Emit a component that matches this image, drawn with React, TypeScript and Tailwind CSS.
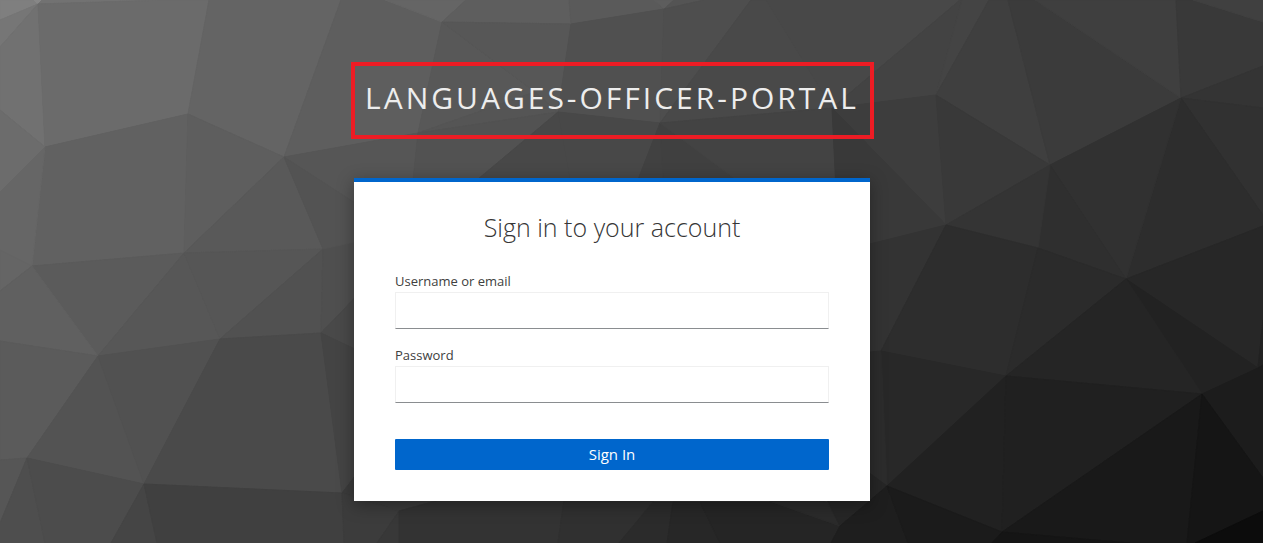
const facets: [string, string][] = [
  // top left
  ['0,0 34,0 38,4 0,20', '#7f7f7f'],
  ['34,0 42,0 38,4', '#878787'],
  ['0,20 38,4 0,47', '#767676'],
  ['38,4 0,47 0,110 45,147', '#717171'],
  ['42,0 165,0 38,4', '#727272'],
  ['38,4 165,0 209,0 188,114 45,147', '#6b6b6b'],
  ['0,110 45,147 0,192', '#6c6c6c'],
  ['209,0 341,0 284,157 188,114', '#646464'],
  ['45,147 188,114 184,253 32,266', '#616161'],
  ['0,192 45,147 32,266 0,250', '#666666'],
  ['0,250 32,266 0,291', '#656565'],
  ['188,114 284,157 184,253', '#5e5e5e'],
  ['284,157 184,253 323,249', '#595959'],
  // lower left
  ['32,266 184,253 98,356', '#5b5b5b'],
  ['184,253 98,356 220,339', '#575757'],
  ['184,253 323,249 220,339', '#565656'],
  ['323,249 220,339 321,333', '#515151'],
  ['0,291 32,266 98,356 0,341', '#606060'],
  ['0,341 98,356 27,458 0,460', '#5b5b5b'],
  ['98,356 27,458 144,484', '#535353'],
  ['98,356 220,339 144,484', '#515151'],
  ['220,339 321,333 342,493 144,484', '#4a4a4a'],
  ['0,460 27,458 0,523', '#565656'],
  ['0,523 27,458 45,543 0,543', '#4e4e4e'],
  ['27,458 144,484 111,543 45,543', '#4c4c4c'],
  ['144,484 111,543 157,543', '#454545'],
  ['144,484 342,493 344,543 157,543', '#404040'],
  ['323,249 321,333 420,230 400,232', '#4f4f4f'],
  ['321,333 420,230 420,380', '#494949'],
  ['321,333 420,380 342,493', '#444444'],
  ['342,493 420,393 520,478 399,511', '#3b3b3b'],
  ['342,493 399,511 377,543 344,543', '#3c3c3c'],
  ['399,511 377,543 399,543', '#383838'],
  ['399,511 520,478 567,478 558,543 399,543', '#333333'],
  ['567,478 680,468 619,543 558,543', '#303030'],
  ['653,502 673,502 667,543 619,543', '#2b2b2b'],
  ['673,502 700,502 720,543 667,543', '#272727'],
  ['700,502 772,502 840,526 831,543 720,543', '#252525'],
  ['772,502 740,490 827,502 840,526', '#2b2b2b'],
  // top centre
  ['341,0 385,0 442,22 418,133 284,157', '#5e5e5e'],
  ['385,0 466,0 442,22', '#656565'],
  ['466,0 569,0 571,24 442,22', '#5e5e5e'],
  ['442,22 418,133 535,92', '#585858'],
  ['442,22 571,24 558,112 535,92', '#575757'],
  ['418,133 535,92 558,112', '#555555'],
  ['284,157 418,133 412,190 400,232', '#565656'],
  ['284,157 400,232 323,249', '#535353'],
  ['418,133 558,112 465,190 412,190', '#525252'],
  ['558,112 465,190 572,190', '#484848'],
  ['569,0 654,0 664,9 571,24', '#5a5a5a'],
  ['654,0 674,0 664,9', '#5d5d5d'],
  ['674,0 704,0 664,9', '#545454'],
  ['571,24 664,9 660,123 558,112', '#505050'],
  ['664,9 704,0 751,0 660,123', '#4e4e4e'],
  ['751,0 766,0 832,108 660,123', '#494949'],
  ['558,112 660,123 634,190 572,190', '#484848'],
  ['660,123 634,190 664,190', '#414141'],
  ['660,123 664,190 750,190', '#404040'],
  ['660,123 832,108 836,190 750,190', '#434343'],
  ['766,0 960,0 832,108', '#484848'],
  // top right
  ['832,108 960,0 962,0 936,95', '#434343'],
  ['962,0 989,0 936,95', '#444444'],
  ['832,108 936,95 946,225', '#3d3d3d'],
  ['832,108 946,225 850,250 836,190', '#393939'],
  ['989,0 1008,0 1050,165 936,95', '#3f3f3f'],
  ['936,95 1050,165 946,225', '#393939'],
  ['1008,0 1035,0 1181,98 1050,165', '#3b3b3b'],
  ['1035,0 1176,0 1181,98', '#3f3f3f'],
  ['1176,0 1193,0 1263,22 1263,66 1181,98', '#393939'],
  ['1193,0 1263,0 1263,22', '#404040'],
  ['1181,98 1263,66 1263,108', '#343434'],
  ['1181,98 1263,108 1263,215', '#313131'],
  ['1181,98 1263,215 1263,226 1126,279', '#2d2d2d'],
  ['1050,165 1181,98 1126,279', '#313131'],
  ['1050,165 1038,248 1126,279', '#2f2f2f'],
  ['946,225 1050,165 1038,248', '#343434'],
  ['946,225 850,249 860,353 881,351', '#333333'],
  // lower right
  ['946,225 881,351 1006,376 1038,248', '#2d2d2d'],
  ['1038,248 1126,279 1006,376', '#2b2b2b'],
  ['1126,279 1263,226 1263,320 1258,368', '#272727'],
  ['1263,320 1263,365 1258,368', '#222222'],
  ['1126,279 1258,368 1202,394', '#222222'],
  ['1126,279 1202,394 1006,376', '#252525'],
  ['881,351 1006,376 887,486', '#282828'],
  ['881,351 860,353 860,466 887,486', '#2c2c2c'],
  ['860,466 887,486 840,526 827,500', '#262626'],
  ['1006,376 887,486 1002,532', '#212121'],
  ['1006,376 1202,394 1002,532', '#202020'],
  ['1202,394 1258,368 1263,365 1263,478', '#1c1c1c'],
  ['1202,394 1002,532 1130,543 1187,543', '#191919'],
  ['1202,394 1187,543 1195,543 1263,511 1263,478', '#151515'],
  ['1195,543 1263,511 1263,543', '#0c0c0c'],
  ['887,486 840,526 831,543 908,543', '#1e1e1e'],
  ['887,486 1002,532 992,543 908,543', '#1b1b1b'],
  ['1002,532 1130,543 992,543', '#151515'],
];

function Backdrop() {
  return (
    <svg
      aria-hidden="true"
      viewBox="0 0 1263 543"
      preserveAspectRatio="xMidYMid slice"
      className="absolute inset-0 -z-10 h-full w-full bg-[#3c3c3c]"
    >
      {facets.map(([points, fill]) => (
        <polygon key={points} points={points} fill={fill} stroke={fill} strokeWidth="1" strokeLinejoin="round" />
      ))}
    </svg>
  );
}

function Field({ id, label, type }: { id: string; label: string; type: string }) {
  return (
    <div>
      <label htmlFor={id} className="mb-0.5 block text-[13px] leading-[18px] text-[#404040]">
        {label}
      </label>
      <input
        id={id}
        name={id}
        type={type}
        className="block h-[37px] w-full border border-[#f0f0f0] border-b-[#8a8d90] bg-white px-2 text-[15px] outline-none"
      />
    </div>
  );
}

export default function App() {
  return (
    <div className="relative isolate flex min-h-screen flex-col items-center overflow-hidden pt-[62px] pr-[39px] pb-10 font-['Open_Sans',sans-serif]">
      <Backdrop />
      <header className="flex h-[77px] w-full max-w-[523px] items-center justify-center border-4 border-[#ed1c24] pb-1.5">
        <h1 className="text-3xl tracking-[3px] whitespace-nowrap text-[#ededed] uppercase">
          languages-officer-portal
        </h1>
      </header>
      <main className="mt-[39px] w-full max-w-[516px] border-t-4 border-[#0066cc] bg-white px-[41px] pt-[29px] pb-[31px] shadow-[0_4px_16px_rgba(0,0,0,0.35)]">
        <h2 className="text-center text-[25px] leading-8 font-light text-[#363636]">
          Sign in to your account
        </h2>
        <form className="mt-[29px]" onSubmit={(e) => e.preventDefault()}>
          <div className="flex flex-col gap-[17px]">
            <Field id="username" label="Username or email" type="text" />
            <Field id="password" label="Password" type="password" />
          </div>
          <button
            type="submit"
            className="mt-9 block h-[31px] w-full rounded-[1px] bg-[#0066cc] pb-0.5 text-[15px] leading-5 text-white"
          >
            Sign In
          </button>
        </form>
      </main>
    </div>
  );
}
